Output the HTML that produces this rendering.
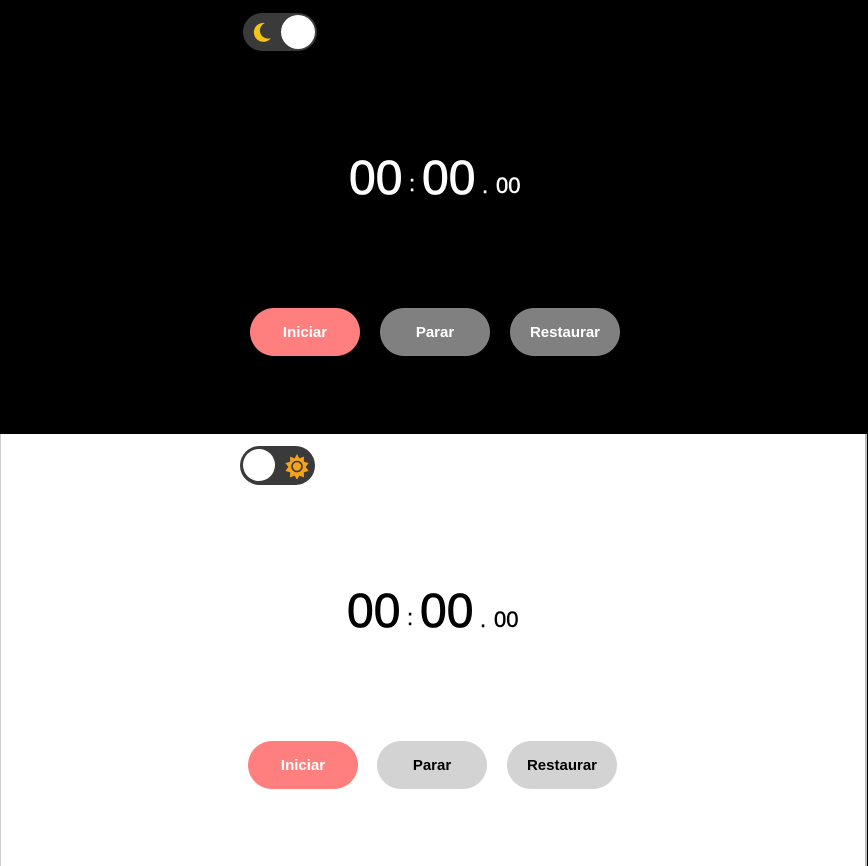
<!DOCTYPE html>
<html><head><meta charset="utf-8"><style>
html,body{margin:0;padding:0;width:868px;height:866px;overflow:hidden;background:#000;font-family:"Liberation Sans",sans-serif}
.p{position:absolute;left:0;width:868px}
.top{top:0;height:434px;background:#000}
.bot{top:434px;height:432px;background:#fff;left:0;width:864px;border-left:1px solid #ccc;border-right:2px solid #bbb}
.t{position:absolute;line-height:1;white-space:nowrap}
.big{font-size:48px;-webkit-text-stroke:0.8px currentColor}
.sm{font-size:22px;-webkit-text-stroke:0.4px currentColor}
.btn{position:absolute;width:110px;height:48px;border-radius:24px;font-weight:bold;font-size:15px;line-height:50px;text-align:center}
.tog{position:absolute;width:74px;height:38px;border-radius:19px;background:#3a3a3a}
.knob{position:absolute;top:2px;width:34px;height:34px;border-radius:50%;background:#fff}
</style></head><body>
<div class="p top">
  <div class="tog" style="left:243px;top:13px">
    <svg style="position:absolute;left:7px;top:7px" width="24" height="24" viewBox="0 0 24 24"><path d="M15 3 A9.5 9.5 0 1 0 21 18 A7.5 7.5 0 0 1 15 3Z" fill="#f2c318"/></svg>
    <div class="knob" style="left:38px"></div>
  </div>
  <div class="t big" style="left:349px;top:155px;color:#fff">00</div>
  <div class="t sm" style="left:409px;top:173px;color:#fff">:</div>
  <div class="t big" style="left:422px;top:155px;color:#fff">00</div>
  <div class="t sm" style="left:482px;top:175px;color:#fff">.</div>
  <div class="t sm" style="left:496px;top:175px;color:#fff">00</div>
  <div class="btn" style="left:250px;top:308px;background:#ff7f7f;color:#fff">Iniciar</div>
  <div class="btn" style="left:380px;top:308px;background:#808080;color:#fff">Parar</div>
  <div class="btn" style="left:510px;top:308px;background:#808080;color:#fff">Restaurar</div>
</div>
<div class="p bot">
  <div class="tog" style="left:239px;top:12px;width:75px;height:39px;border-radius:20px">
    <div class="knob" style="left:3px;top:3px;width:32px;height:32px;border:0"></div>
    <svg style="position:absolute;left:44px;top:7px" width="26" height="26" viewBox="0 0 26 26">
      <polygon fill="#f5a31a" points="13,1 15.3,5.4 20,3.6 19.8,8.6 24.6,10.1 21.6,13.9 24.6,17.9 19.8,19.4 20,24.4 15.3,22.6 13,27 10.7,22.6 6,24.4 6.2,19.4 1.4,17.9 4.4,13.9 1.4,10.1 6.2,8.6 6,3.6 10.7,5.4"/>
      <circle cx="13" cy="13.5" r="5" fill="#f5a31a" stroke="#3a3a3a" stroke-width="1.6"/>
    </svg>
  </div>
  <div class="t big" style="left:346px;top:154px;color:#000">00</div>
  <div class="t sm" style="left:406px;top:173px;color:#000">:</div>
  <div class="t big" style="left:419px;top:154px;color:#000">00</div>
  <div class="t sm" style="left:479px;top:175px;color:#000">.</div>
  <div class="t sm" style="left:493px;top:175px;color:#000">00</div>
  <div class="btn" style="left:247px;top:307px;background:#ff7f7f;color:#fff">Iniciar</div>
  <div class="btn" style="left:376px;top:307px;background:#d3d3d3;color:#000">Parar</div>
  <div class="btn" style="left:506px;top:307px;background:#d3d3d3;color:#000">Restaurar</div>
</div>
</body></html>
